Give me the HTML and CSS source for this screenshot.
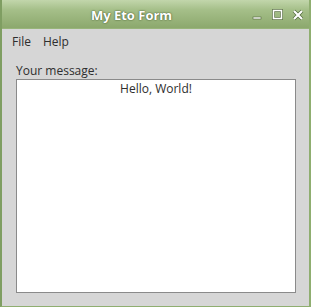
FILE: index.html
```html
<!DOCTYPE html>
<html>
<head lang="en">
    <meta charset="UTF-8">
    <title>My Eto Form</title>
    <link rel="stylesheet" href="styles.css">
</head>
<body>
<div class="window">
    <div class="titlebar">
        <div class="title">My Eto Form</div>
        <div class="controls">
            <svg class="btn" width="12" height="12" viewBox="0 0 12 12"><rect x="1" y="8" width="8" height="2" fill="#fff" stroke="#4d6338" stroke-width="0.6"/></svg>
            <svg class="btn" width="12" height="12" viewBox="0 0 12 12"><rect x="1.5" y="1.5" width="8" height="8" fill="none" stroke="#4d6338" stroke-width="2.8"/><rect x="1.5" y="1.5" width="8" height="8" fill="none" stroke="#fff" stroke-width="1.6"/></svg>
            <svg class="btn" width="12" height="12" viewBox="0 0 12 12"><path d="M2 2 L10 10 M10 2 L2 10" stroke="#4d6338" stroke-width="3.4"/><path d="M2 2 L10 10 M10 2 L2 10" stroke="#fff" stroke-width="2.2"/></svg>
        </div>
    </div>
    <div class="content">
        <ul class="menu">
            <li>File</li>
            <li>Help</li>
        </ul>
        <div class="panel">
            <div class="label">Your message:</div>
            <div class="textbox">Hello, World!</div>
        </div>
    </div>
</div>
</body>
</html>
```

FILE: styles.css
```css
*{margin: 0; padding: 0; box-sizing: border-box}
ul{list-style: none}

body{
    font-family: "Open Sans", "DejaVu Sans", sans-serif;
    font-size: 12px;
    color: #2e2e2e;
    background: #d6d6d6;
}
.window{
    width: 311px;
    height: 307px;
    display: flex;
    flex-direction: column;
    background: #d6d6d6;
    border-left: 2px solid #7f9e62;
    border-right: 2px solid #8fae70;
    border-bottom: 1px solid #8fae70;
}
.titlebar{
    height: 29px;
    flex: none;
    position: relative;
    display: flex;
    align-items: center;
    justify-content: center;
    background: linear-gradient(#c2d6ab, #a5bf89 35%, #8ca86d);
    border-bottom: 1px solid #98b47a;
}
.title{
    color: #fff;
    font-weight: bold;
    font-size: 13px;
    text-shadow: 0 0 2px #4d6338, 0 0 1px #4d6338;
    margin-left: -48px;
    margin-top: 2px;
}
.controls{
    position: absolute;
    right: 5px;
    top: 9px;
    display: flex;
    gap: 8px;
}
.content{
    flex: 1;
    display: flex;
    flex-direction: column;
}
.menu{
    display: flex;
    gap: 12px;
    padding: 4px 0 0 10px;
    height: 28px;
}
.panel{
    flex: 1;
    display: flex;
    flex-direction: column;
    padding: 5px 13px 13px 14px;
}
.label{
    line-height: 17px;
}
.textbox{
    flex: 1;
    background: #fff;
    border: 1px solid #8a8a8a;
    text-align: center;
    line-height: 17px;
}
```
